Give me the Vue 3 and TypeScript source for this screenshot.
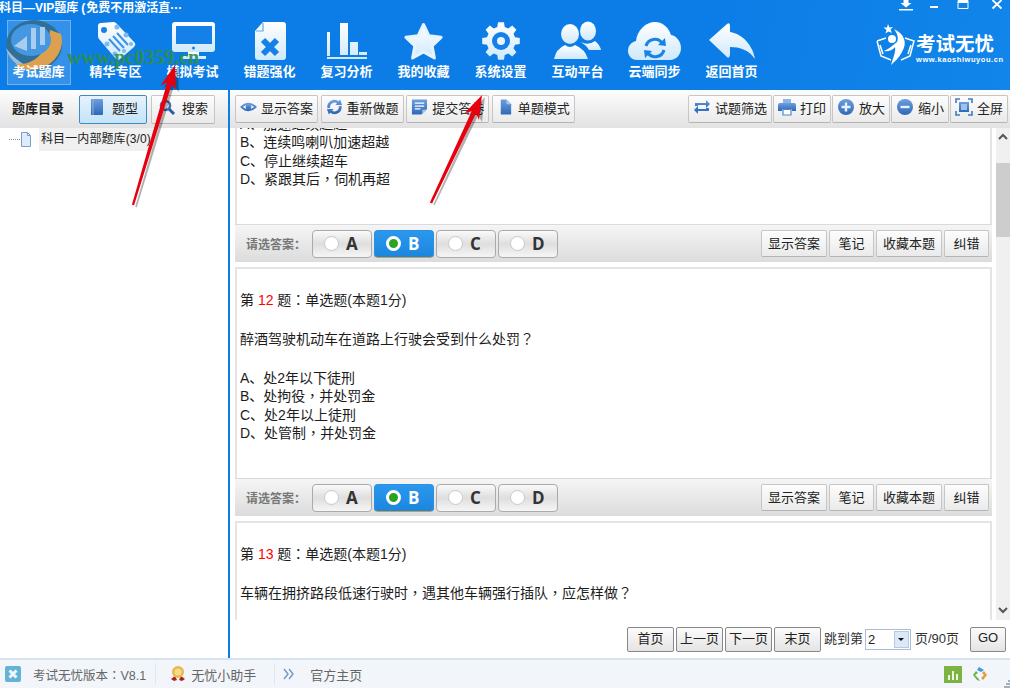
<script setup lang="ts">
function circle(cx: number, cy: number, r: number, ry: number = r): string {
  return `M${cx - r} ${cy}a${r} ${ry} 0 1 0 ${2 * r} 0a${r} ${ry} 0 1 0 ${-2 * r} 0Z`
}
function star(cx: number, cy: number, R: number, r: number): string {
  let d = ''
  for (let i = 0; i < 10; i++) {
    const a = (-90 + i * 36) * Math.PI / 180
    const q = i % 2 ? r : R
    d += `${i ? 'L' : 'M'}${(cx + q * Math.cos(a)).toFixed(1)} ${(cy + q * Math.sin(a)).toFixed(1)}`
  }
  return d + 'Z'
}
function gear(cx: number, cy: number, R: number, r: number, n: number): string {
  let d = ''
  const step = 360 / n
  for (let i = 0; i < n; i++) {
    const c = i * step - 90
    const pts: [number, number][] = [[c - step * 0.33, r], [c - step * 0.2, R], [c + step * 0.2, R], [c + step * 0.33, r]]
    for (const [deg, q] of pts) {
      const a = deg * Math.PI / 180
      d += `${d ? 'L' : 'M'}${(cx + q * Math.cos(a)).toFixed(1)} ${(cy + q * Math.sin(a)).toFixed(1)}`
    }
  }
  return d + 'Z'
}
function arrow(tx: number, ty: number, bx: number, by: number, shaft: number): string {
  const dx = bx - tx
  const dy = by - ty
  const len = Math.hypot(dx, dy)
  const ux = dx / len
  const uy = dy / len
  const nx = -uy
  const ny = ux
  const p = (along: number, off: number) => `${(tx + ux * along + nx * off).toFixed(1)},${(ty + uy * along + ny * off).toFixed(1)}`
  return [p(0, 0), p(24, 8), p(19, shaft), p(len, shaft * 0.5), p(len, -shaft * 0.5), p(19, -shaft), p(24, -8)].join(' ')
}
// Split text so that full-width comma, colon and question mark sit centred in their cell.
function parts(text: string): { t: string; p: boolean }[] {
  return text.split(/([，？：])/).filter(Boolean).map((t) => ({ t, p: /^[，？：]$/.test(t) }))
}

const WHITE = 'url(#navGrad)'
const BLUE = '#1480e8'
const dots = [circle(40, 9, 2.5), circle(49, 17, 2.5), circle(54, 26, 2), circle(30, 26, 2.5), circle(38, 36, 2.5), circle(47, 33, 2)].join('')

interface Shape { d: string; fill?: string; stroke?: string; w?: number }
interface NavItem { label: string; active?: boolean; shapes: Shape[] }

const navItems: NavItem[] = [
  { label: '考试题库', active: true, shapes: [] },
  {
    label: '精华专区',
    shapes: [
      { d: 'M21 8Q21 5 24 5L36 4Q38 4 39 5L58 25Q59 27 57 29L43 41Q41 43 39 41L22 21Q21 20 21 18Z', fill: WHITE },
      { d: dots, fill: '#79bbf2' },
      { d: circle(27, 12, 3), fill: BLUE },
      { d: 'M32 21L43 33M36 18L47 30M40 15L51 27', stroke: '#3c92e6', w: 2 }
    ]
  },
  {
    label: '模拟考试',
    shapes: [
      { d: 'M21 4H58Q61 4 61 7V31Q61 34 58 34H21Q18 34 18 31V7Q18 4 21 4Z', fill: WHITE },
      { d: 'M22 8H58V26H22Z', fill: BLUE },
      { d: circle(39.5, 30, 1.5), fill: BLUE },
      { d: 'M34 34H45V38H52V41H27V38H34Z', fill: WHITE }
    ]
  },
  {
    label: '错题强化',
    shapes: [
      { d: 'M32 4H52Q55 4 55 7V39Q55 42 52 42H27Q24 42 24 39V13Z', fill: WHITE },
      { d: 'M32 5V13H25', stroke: '#5aa8ee', w: 1.2 },
      { d: 'M32 22L46 36M46 22L32 36', stroke: BLUE, w: 6 }
    ]
  },
  {
    label: '复习分析',
    shapes: [
      { d: 'M19 14H22V38H19ZM19 39H59V41H19ZM32 5H40V37H32ZM42 24H50V37H42ZM51 34H59V37H51Z', fill: WHITE }
    ]
  },
  { label: '我的收藏', shapes: [{ d: star(38.5, 25, 18.5, 9), fill: WHITE, stroke: '#e6f4fe', w: 3 }] },
  {
    label: '系统设置',
    shapes: [
      { d: gear(39, 23, 19, 14.5, 8), fill: WHITE },
      { d: circle(39, 23, 9), fill: BLUE },
      { d: circle(39, 23, 4), fill: '#e8f5fe' }
    ]
  },
  {
    label: '互动平台',
    shapes: [
      { d: circle(49, 13, 8, 9.5), fill: WHITE },
      { d: 'M42 24Q49 28 56 23Q61 27 62 32H50Q47 27 42 24Z', fill: WHITE },
      { d: circle(31, 16, 9, 10), fill: WHITE },
      { d: 'M15 41Q17 31 26 27Q31 31 36 27Q46 31 49 41Z', fill: WHITE }
    ]
  },
  {
    label: '云端同步',
    shapes: [
      { d: 'M21 42C15 42 12 37 12 33C12 27 16 24 20 23C21 12 30 4 39 4C47 4 53 10 55 17C61 18 65 24 65 30C65 37 60 42 54 42Z', fill: WHITE },
      { d: 'M30 28A9 9 0 0 1 46 25M48 32A9 9 0 0 1 32 35', stroke: '#1a82e6', w: 3 },
      { d: 'M42 27L50 28L49 20ZM36 33L28 32L29 40Z', fill: '#1a82e6' }
    ]
  },
  {
    label: '返回首页',
    shapes: [{ d: 'M16 22L34 6Q37 4 37 8V14C50 16 60 28 62 41C56 32 47 29 37 29V37Q36 41 34 39Z', fill: WHITE }]
  }
]

interface ToolIcon { d: string; fill?: string; stroke?: string; w?: number }
const TB = 'url(#toolGrad)'
const icons: Record<string, ToolIcon[]> = {
  eye: [
    { d: 'M0 9Q9 0 18 9Q9 18 0 9ZM3 9Q9 14 15 9Q9 4 3 9Z', fill: TB },
    { d: circle(9, 9, 3), fill: TB }
  ],
  redo: [
    { d: 'M3 10A6 6 0 0 1 13 4.5M15 8A6 6 0 0 1 5 13.5', stroke: TB, w: 3 },
    { d: 'M10 7L17 7L15 1ZM8 11L1 11L3 17Z', fill: TB }
  ],
  form: [
    { d: 'M1 1H17V11L11 17H1Z', fill: TB },
    { d: 'M4 5H14M4 8H14M4 11H10', stroke: '#fff', w: 1.3 },
    { d: 'M12 17V12H17Z', fill: '#a8c6ec' }
  ],
  page: [{ d: 'M4 1H10L15 6V17H4Z', fill: TB }, { d: 'M10 1V6H15Z', fill: '#a8c6ec' }],
  filter: [
    { d: 'M2 8V5H13V2L17 6L13 10V7H5V8Z', fill: TB },
    { d: 'M16 10V13H5V16L1 12L5 8V11H13V10Z', fill: '#2f74c8' }
  ],
  print: [
    { d: 'M5 1H13V5H5Z', fill: '#8db4e4' },
    { d: 'M2 5H16Q18 5 18 7V13H14V11H4V13H0V7Q0 5 2 5Z', fill: TB },
    { d: 'M5 11.5H13V17H5Z', fill: '#fff', stroke: '#4f86cc', w: 1.2 }
  ],
  plus: [{ d: circle(9, 9, 8), fill: TB }, { d: 'M4.5 9H13.5M9 4.5V13.5', stroke: '#e8f0fa', w: 2.4 }],
  minus: [{ d: circle(9, 9, 8), fill: TB }, { d: 'M4.5 9H13.5', stroke: '#e8f0fa', w: 2.4 }],
  full: [
    { d: 'M1 5V1H5M13 1H17V5M17 13V17H13M5 17H1V13', stroke: '#3f7cc8', w: 1.6 },
    { d: 'M4 4H14V14H4Z', fill: TB },
    { d: 'M6 6H12V12H6Z', fill: '#9fc0e8' }
  ],
  book: [
    { d: 'M3 1H14Q15 1 15 2V16Q15 17 14 17H3Z', fill: TB },
    { d: 'M5 1V17', stroke: '#8db4e4', w: 1 }
  ],
  search: [
    { d: circle(7.5, 7.5, 4.5), stroke: '#3a72bc', w: 2.6 },
    { d: 'M11 11L16 16', stroke: '#2a5ea8', w: 3 }
  ]
}

const leftTools = [
  { label: '显示答案', icon: 'eye' },
  { label: '重新做题', icon: 'redo' },
  { label: '提交答卷', icon: 'form' },
  { label: '单题模式', icon: 'page' }
]
const rightTools = [
  { label: '试题筛选', icon: 'filter' },
  { label: '打印', icon: 'print' },
  { label: '放大', icon: 'plus' },
  { label: '缩小', icon: 'minus' },
  { label: '全屏', icon: 'full' }
]

interface Question { no: number; text: string; options: string[]; partial?: boolean; noOptions?: boolean }
const questions: Question[] = [
  {
    no: 11,
    partial: true,
    text: '',
    options: ['A、加速继续超越', 'B、连续鸣喇叭加速超越', 'C、停止继续超车', 'D、紧跟其后，伺机再超']
  },
  {
    no: 12,
    text: '醉酒驾驶机动车在道路上行驶会受到什么处罚？',
    options: ['A、处2年以下徒刑', 'B、处拘役，并处罚金', 'C、处2年以上徒刑', 'D、处管制，并处罚金']
  },
  {
    no: 13,
    noOptions: true,
    text: '车辆在拥挤路段低速行驶时，遇其他车辆强行插队，应怎样做？',
    options: []
  }
]
const choices = ['A', 'B', 'C', 'D']
const actions = ['显示答案', '笔记', '收藏本题', '纠错']
const pages = ['首页', '上一页', '下一页', '末页']

const arrow1 = arrow(175, 65, 133, 205, 2.4)
const arrow2 = arrow(482, 95, 431, 203, 2.4)
const arrow1s = arrow(178, 67, 136, 207, 1.6)
const arrow2s = arrow(485, 97, 434, 205, 1.6)
</script>

<template>
  <div class="app">
    <svg class="defs" width="0" height="0" aria-hidden="true">
      <defs>
        <linearGradient id="navGrad" x1="0" y1="0" x2="0" y2="1">
          <stop offset="0" stop-color="#ffffff" />
          <stop offset="1" stop-color="#cfe9fb" />
        </linearGradient>
        <linearGradient id="toolGrad" x1="0" y1="0" x2="0" y2="1">
          <stop offset="0" stop-color="#6c9fde" />
          <stop offset="1" stop-color="#2f68b8" />
        </linearGradient>
      </defs>
    </svg>

    <header class="header">
      <div class="title-row">
        <span class="title">科目—VIP题库<span class="paren">(</span>免费不用激活直···</span>
        <div class="win-ctrls">
          <svg class="wc-dl" width="16" height="12" viewBox="0 0 16 12"><path d="M5.5 0H10.5V3H13.5L8 7.5L2.5 3H5.5ZM1 9H15V10.5H1Z" fill="#fff" /></svg>
          <svg width="10" height="12" viewBox="0 0 10 12"><path d="M1 6H9V8H1Z" fill="#fff" /></svg>
          <svg class="wc-max" width="12" height="12" viewBox="0 0 12 12"><path d="M1 0.5H11V8.5H1Z" fill="none" stroke="#fff" /><path d="M1 1H11V3H1Z" fill="#fff" /></svg>
          <svg width="12" height="12" viewBox="0 0 12 12"><path d="M1.5 0L10.5 8.5M10.5 0L1.5 8.5" stroke="#fff" stroke-width="1.8" /></svg>
        </div>
      </div>
      <div class="nav-row">
        <nav class="nav">
          <div v-for="item in navItems" :key="item.label" class="nav-item" :class="{ active: item.active }">
            <svg v-if="item.active" class="emblem" width="60" height="54" viewBox="0 0 60 54">
              <ellipse cx="30" cy="27" rx="28" ry="25" fill="#2f7099" />
              <path d="M2 30C5 44 18 52 30 52C24 48 12 44 2 30Z" fill="#9dbdd6" />
              <path d="M57 16C62 34 46 52 28 52C22 52 16 50 11 46C26 48 44 38 46 12Z" fill="#dda04e" />
              <ellipse cx="27" cy="22" rx="20" ry="16" fill="#4597e2" />
              <path d="M10 28L23 18V33ZM27 10H32V31H27ZM36 9H41V27H36Z" fill="#a9cdee" />
            </svg>
            <svg class="nav-icon" width="77" height="46" viewBox="0 0 77 46">
              <template v-for="(s, i) in item.shapes" :key="i">
                <path :d="s.d" :fill="s.fill || 'none'" :stroke="s.stroke || 'none'" :stroke-width="s.w || 0" stroke-linejoin="round" />
              </template>
            </svg>
            <span class="nav-label">{{ item.label }}</span>
          </div>
        </nav>
        <div class="brand">
          <svg width="42" height="44" viewBox="0 0 42 44">
            <path d="M12 0L13.5 3.5L17 3L14.5 5.5L16 9L12.5 7.5L9.5 9.5L10.5 6L7.5 3.5L11 3.5Z" fill="#fff" />
            <circle cx="16" cy="15" r="4" fill="#fff" />
            <path d="M18 5C28 10 32 18 26 28C23 34 18 38 15 41C17 34 20 28 19 23C16 27 11 28 8 27C13 25 16 22 21 18C23 14 21 9 18 5Z" fill="#fff" />
            <path d="M1 17L10 14M1 17L5 32L15 36M29 14L38 17L34 32L25 36M4 21L7 30M35 21L32 30" fill="none" stroke="#fff" stroke-width="1.5" />
          </svg>
          <div class="brand-text">
            <span class="brand-name">考试无忧</span>
            <span class="brand-url">www.kaoshiwuyou.cn</span>
          </div>
        </div>
      </div>
    </header>

    <div class="body">
      <aside class="sidebar">
        <div class="side-bar">
          <span class="side-title">题库目录</span>
          <button class="btn side-btn selected">
            <svg width="18" height="18" viewBox="0 0 18 18"><path v-for="(s, i) in icons.book" :key="i" :d="s.d" :fill="s.fill || 'none'" :stroke="s.stroke || 'none'" :stroke-width="s.w || 0" /></svg>
            题型
          </button>
          <button class="btn side-btn">
            <svg width="18" height="18" viewBox="0 0 18 18"><path v-for="(s, i) in icons.search" :key="i" :d="s.d" :fill="s.fill || 'none'" :stroke="s.stroke || 'none'" :stroke-width="s.w || 0" /></svg>
            搜索
          </button>
        </div>
        <div class="tree-row">
          <span class="tree-dots"></span>
          <svg width="12" height="15" viewBox="0 0 12 15">
            <path d="M1.5 0.5H7.5L10.5 3.5V14.5H1.5Z" fill="#dfeafa" stroke="#7f9cc8" />
            <path d="M7.5 0.5V3.5H10.5" fill="none" stroke="#7f9cc8" />
          </svg>
          <span class="tree-label">科目一内部题库(3/0)</span>
        </div>
      </aside>

      <main class="main">
        <div class="toolbar">
          <div class="tool-group left">
            <button v-for="t in leftTools" :key="t.label" class="btn tool">
              <svg width="18" height="18" viewBox="0 0 18 18"><path v-for="(s, i) in icons[t.icon]" :key="i" :d="s.d" :fill="s.fill || 'none'" :stroke="s.stroke || 'none'" :stroke-width="s.w || 0" /></svg>
              {{ t.label }}
            </button>
          </div>
          <div class="tool-group right">
            <button v-for="t in rightTools" :key="t.label" class="btn tool">
              <svg width="18" height="18" viewBox="0 0 18 18"><path v-for="(s, i) in icons[t.icon]" :key="i" :d="s.d" :fill="s.fill || 'none'" :stroke="s.stroke || 'none'" :stroke-width="s.w || 0" /></svg>
              {{ t.label }}
            </button>
          </div>
        </div>

        <div class="scroller">
          <div class="viewport">
            <div class="list">
              <section v-for="q in questions" :key="q.no" class="question">
                <div class="card" :class="{ partial: q.partial }">
                  <template v-if="!q.partial">
                    <p class="q-head">第 <em>{{ q.no }}</em> 题<span class="punct">：</span>单选题(本题1分)</p>
                    <p class="q-text"><span v-for="(s, i) in parts(q.text)" :key="i" :class="{ punct: s.p }">{{ s.t }}</span></p>
                  </template>
                  <p v-for="o in q.options" :key="o" class="q-opt"><span v-for="(s, i) in parts(o)" :key="i" :class="{ punct: s.p }">{{ s.t }}</span></p>
                </div>
                <div v-if="!q.noOptions" class="answer">
                  <span class="answer-label">请选答案：</span>
                  <div class="choices">
                    <button v-for="c in choices" :key="c" class="choice" :class="{ on: c === 'B' }">
                      <span class="radio"></span>{{ c }}
                    </button>
                  </div>
                  <div class="spacer"></div>
                  <button v-for="a in actions" :key="a" class="btn action">{{ a }}</button>
                </div>
              </section>
            </div>
          </div>
          <div class="scrollbar">
            <div class="sb-up">
              <svg width="10" height="8" viewBox="0 0 10 8"><path d="M1 6L5 2L9 6" fill="none" stroke="#555" stroke-width="2" /></svg>
            </div>
            <div class="sb-thumb"></div>
            <div class="spacer"></div>
            <div class="sb-down">
              <svg width="10" height="8" viewBox="0 0 10 8"><path d="M1 2L5 6L9 2" fill="none" stroke="#555" stroke-width="2" /></svg>
            </div>
          </div>
        </div>

        <div class="pager">
          <button v-for="p in pages" :key="p" class="page-btn">{{ p }}</button>
          <span class="jump">跳到第</span>
          <div class="select">
            <span class="select-val">2</span>
            <span class="select-arrow"><i></i></span>
          </div>
          <span class="total">页/90页</span>
          <button class="page-btn go">GO</button>
        </div>
      </main>
    </div>

    <footer class="status">
      <svg class="st-logo" width="16" height="16" viewBox="0 0 16 16">
        <rect width="16" height="16" rx="2" fill="#62b3d6" />
        <path d="M4.5 4.5L11.5 11.5M11.5 4.5L4.5 11.5" stroke="#eef8fc" stroke-width="3" />
      </svg>
      <span class="st-version">考试无忧版本<span class="punct">：</span>V8.1</span>
      <span class="st-sep"></span>
      <svg class="st-medal" width="16" height="18" viewBox="0 0 16 18">
        <path d="M1 14L5 11L7 15L4 16ZM15 14L11 11L9 15L12 16Z" fill="#a8241c" />
        <circle cx="8" cy="7" r="6" fill="#e8b84a" />
        <circle cx="8" cy="7" r="3.5" fill="#f7dc90" />
      </svg>
      <span class="st-helper">无忧小助手</span>
      <span class="st-sep second"></span>
      <svg class="st-more" width="11" height="12" viewBox="0 0 11 12">
        <path d="M1 1L5 6L1 11M6 1L10 6L6 11" fill="none" stroke="#6f9cc8" stroke-width="1.5" />
      </svg>
      <span class="st-home">官方主页</span>
      <div class="spacer"></div>
      <svg width="18" height="17" viewBox="0 0 18 17">
        <rect width="18" height="17" fill="#7cb342" />
        <path d="M4 14V9H6V14ZM8 14V5H10V14ZM12 14V8H14V14Z" fill="#eef6e0" />
      </svg>
      <svg class="st-diamond" width="16" height="17" viewBox="0 0 16 17">
        <path d="M7 1L12 4L9 6L5 4Z" fill="#3f9ae0" />
        <path d="M12 5L15 9L11 14L9 12L12 9L10 7Z" fill="#e89a3c" />
        <path d="M4 5L6 7L3 9L6 12L8 15L5 14L1 9Z" fill="#6ab04c" />
      </svg>
      <svg class="st-grip" width="6" height="8" viewBox="0 0 6 8">
        <path d="M4 0H6V2H4ZM2 3H4V5H2ZM4 3H6V5H4ZM0 6H2V8H0ZM2 6H4V8H2ZM4 6H6V8H4Z" fill="#9fb0c0" />
      </svg>
    </footer>

    <div class="watermark">www.pc0359.cn</div>
    <svg class="arrows" width="1010" height="688" viewBox="0 0 1010 688">
      <polygon :points="arrow1s" fill="#000" opacity="0.3" />
      <polygon :points="arrow2s" fill="#000" opacity="0.3" />
      <polygon :points="arrow1" fill="#e8000e" />
      <polygon :points="arrow2" fill="#e8000e" />
    </svg>
  </div>
</template>

<style scoped>
.app {
  position: relative;
  width: 1010px;
  height: 688px;
  display: flex;
  flex-direction: column;
  overflow: hidden;
  background: #fff;
  color: #222;
  font-family: "Liberation Sans", "Noto Sans CJK SC", sans-serif;
  font-size: 13px;
}
.defs { position: absolute; }
.spacer { flex: 1; }
.punct { font-family: "Noto Sans CJK TC", sans-serif; line-height: 0; }

.header {
  height: 90px;
  flex: none;
  display: flex;
  flex-direction: column;
  color: #fff;
  background: linear-gradient(100deg, #0c7de6 0%, #0c7de6 70%, #1185ea 100%);
}
.title-row {
  height: 18px;
  display: flex;
  justify-content: space-between;
  align-items: flex-start;
}
.title {
  font-weight: 700;
  font-size: 12px;
  line-height: 17px;
  margin-left: -1px;
  white-space: nowrap;
}
.paren { margin: 0 1px 0 3px; }
.win-ctrls {
  display: flex;
  gap: 18px;
  margin-right: 7px;
}
.wc-dl { margin-right: -3px; }
.wc-max { margin-right: 4px; }
.nav-row { display: flex; flex: 1; }
.nav { display: flex; }
.nav-item {
  position: relative;
  width: 77px;
  height: 72px;
  display: flex;
  flex-direction: column;
  align-items: center;
}
.nav-item.active::before {
  content: "";
  position: absolute;
  left: 7px;
  top: 2px;
  width: 62px;
  height: 63px;
  background: rgba(255, 255, 255, 0.16);
  border: 1px solid rgba(255, 255, 255, 0.3);
}
.emblem { position: absolute; left: 4px; top: 0; }
.nav-icon { position: relative; flex: none; }
.nav-label {
  position: relative;
  font-weight: 700;
  font-size: 13px;
  line-height: 16px;
  white-space: nowrap;
}
.brand {
  display: flex;
  margin-left: 106px;
  margin-top: 6px;
  height: 46px;
}
.brand-text {
  display: flex;
  flex-direction: column;
  margin-left: -2px;
  padding-top: 9px;
}
.brand-name {
  font-weight: 700;
  font-size: 19.5px;
  line-height: 22px;
  white-space: nowrap;
}
.brand-url {
  font-weight: 700;
  font-size: 7.5px;
  line-height: 10px;
  letter-spacing: 0.55px;
  white-space: nowrap;
}

.body { flex: 1; display: flex; min-height: 0; }
.sidebar {
  width: 228px;
  flex: none;
  border-right: 2px solid #0f7de8;
  background: #fff;
}
.side-bar {
  height: 38px;
  display: flex;
  align-items: center;
  gap: 4px;
  background: linear-gradient(#fdfdfd, #e2e2e2);
}
.side-title {
  font-weight: 700;
  font-size: 13px;
  margin-left: 12px;
  margin-right: 11px;
  padding-bottom: 3px;
  white-space: nowrap;
}
.btn {
  display: flex;
  align-items: center;
  justify-content: center;
  box-sizing: border-box;
  font: inherit;
  color: #222;
  background: linear-gradient(#fdfdfd, #eaeaea);
  border: 1px solid #c6c6c6;
  border-bottom-color: #b4b4b4;
  border-radius: 2px;
  padding: 0 4px;
  white-space: nowrap;
}
.side-btn { height: 29px; width: 64px; gap: 6px; padding-bottom: 4px; }
.side-btn.selected {
  width: 68px;
  background: linear-gradient(#e6f3fd, #c4e3f8);
  border-color: #3f8cc0;
}
.tree-row {
  display: flex;
  align-items: center;
  height: 23px;
  padding-left: 9px;
}
.tree-dots {
  width: 11px;
  border-top: 1px dotted #888;
}
.tree-label {
  margin-left: 7px;
  padding: 0 2px;
  height: 23px;
  line-height: 23px;
  font-size: 12px;
  letter-spacing: 0.1px;
  background: #f0f0f0;
  white-space: nowrap;
}

.main { flex: 1; display: flex; flex-direction: column; min-width: 0; }
.toolbar {
  height: 38px;
  box-sizing: border-box;
  flex: none;
  display: flex;
  justify-content: space-between;
  padding: 5px 2px 5px 5px;
  background: linear-gradient(#fdfdfd, #e2e2e2);
}
.tool-group { display: flex; }
.tool-group.left { gap: 2.6px; }
.tool-group.left .tool { width: 83px; }
.tool-group.right { gap: 1px; }
.tool { height: 28px; gap: 4px; padding-bottom: 4px; }

.scroller { flex: 1; display: flex; min-height: 0; }
.viewport { flex: 1; overflow: hidden; min-width: 0; }
.list {
  width: 757px;
  margin-left: 5px;
  margin-top: -115px;
  display: flex;
  flex-direction: column;
  gap: 5px;
}
.card {
  box-sizing: border-box;
  height: 211px;
  padding: 22px 3px 0;
  border: 2px solid #e4e4e4;
  border-bottom: 0;
  font-size: 14px;
  line-height: 18px;
  color: #1c1c1c;
}
.card.partial { padding-top: 100px; }
.card p { margin: 0; white-space: nowrap; }
.q-head em { color: #f00; font-style: normal; }
.card .q-text { margin: 21px 0; }
.card .q-opt { line-height: 18.4px; }
.answer {
  box-sizing: border-box;
  height: 38px;
  display: flex;
  align-items: center;
  gap: 2px;
  padding: 0 3px 0 11px;
  background: linear-gradient(#f5f5f5, #dcdcdc);
  border-top: 1px solid #dadada;
}
.answer-label {
  width: 64px;
  font-weight: 700;
  font-size: 12px;
  color: #777;
  white-space: nowrap;
}
.choices { display: flex; gap: 2px; }
.choice {
  box-sizing: border-box;
  width: 60px;
  height: 28px;
  display: flex;
  align-items: center;
  gap: 7px;
  padding: 0 0 0 11px;
  font-family: "Open Sans", "Liberation Sans", sans-serif;
  font-weight: 700;
  font-size: 17px;
  color: #333;
  background: linear-gradient(#fafafa, #dedede 50%, #f6f6f6);
  border: 1px solid #aaa;
  border-radius: 4px;
}
.radio {
  box-sizing: border-box;
  width: 15px;
  height: 15px;
  border-radius: 50%;
  background: #fff;
  border: 1px solid #c8c8c8;
}
.choice.on {
  color: #fff;
  background: linear-gradient(#2a98ee, #1c86de);
  border-color: #2a90e0;
  border-bottom-color: #c8a050;
}
.choice.on .radio {
  border: 3px solid #fff;
  background: #2ba322;
}
.action { height: 27px; min-width: 45px; padding: 0 6px 2px; }

.scrollbar {
  width: 14px;
  flex: none;
  display: flex;
  flex-direction: column;
  background: #f0f0f0;
}
.sb-up {
  height: 35px;
  display: flex;
  justify-content: center;
  padding-top: 5px;
  box-sizing: border-box;
}
.sb-thumb { height: 74px; background: #cdcdcd; }
.sb-down {
  height: 20px;
  display: flex;
  justify-content: center;
  align-items: center;
}

.pager {
  height: 38px;
  flex: none;
  box-sizing: border-box;
  display: flex;
  align-items: center;
  justify-content: flex-end;
  gap: 2px;
  padding-right: 4px;
}
.page-btn {
  box-sizing: border-box;
  width: 47px;
  height: 25px;
  padding: 0 0 4px;
  font: inherit;
  color: #222;
  background: linear-gradient(#fbfbfb, #e4e4e4);
  border: 1px solid #888;
  border-radius: 2px;
  white-space: nowrap;
}
.page-btn.go { width: 36px; margin-left: 9px; }
.jump { margin-left: 1px; padding-bottom: 3px; color: #333; white-space: nowrap; }
.select {
  box-sizing: border-box;
  width: 46px;
  height: 21px;
  display: flex;
  align-items: center;
  justify-content: space-between;
  border: 1px solid #aabcd8;
  background: #fff;
}
.select-val { margin-left: 2px; }
.select-arrow {
  width: 15px;
  height: 17px;
  margin-right: 1px;
  display: flex;
  align-items: center;
  justify-content: center;
  background: #dbe8f8;
  border: 1px solid #b8c8e0;
  box-sizing: border-box;
}
.select-arrow i {
  width: 0;
  height: 0;
  border: 3px solid transparent;
  border-top: 3px solid #111;
  border-bottom: 0;
}
.total { margin-left: 2px; padding-bottom: 3px; color: #333; white-space: nowrap; }

.status {
  height: 30px;
  flex: none;
  box-sizing: border-box;
  display: flex;
  align-items: center;
  padding-left: 5px;
  border-top: 2px solid #d5e4f0;
  background: #f2f6fa;
  color: #666;
  font-size: 12.5px;
  position: relative;
}
.st-version { margin-left: 12px; white-space: nowrap; }
.st-sep {
  width: 1px;
  height: 22px;
  background: #dde8f0;
  margin-left: 9px;
}
.st-medal { margin-left: 14px; }
.st-helper { margin-left: 5px; font-size: 13px; white-space: nowrap; }
.st-sep.second { margin-left: 18px; }
.st-more { margin-left: 8px; }
.st-home { margin-left: 16px; font-size: 13px; white-space: nowrap; }
.st-diamond { margin-left: 10px; margin-right: 22px; }
.st-grip { position: absolute; right: 0; bottom: 0; }

.watermark {
  position: absolute;
  left: 67px;
  top: 46px;
  font-family: "Liberation Serif", serif;
  font-weight: 700;
  font-size: 20px;
  line-height: 22px;
  color: #2f8f4a;
  opacity: 0.9;
  white-space: nowrap;
}
.arrows { position: absolute; left: 0; top: 0; pointer-events: none; }
</style>

<style>
html, body { margin: 0; padding: 0; }
</style>
